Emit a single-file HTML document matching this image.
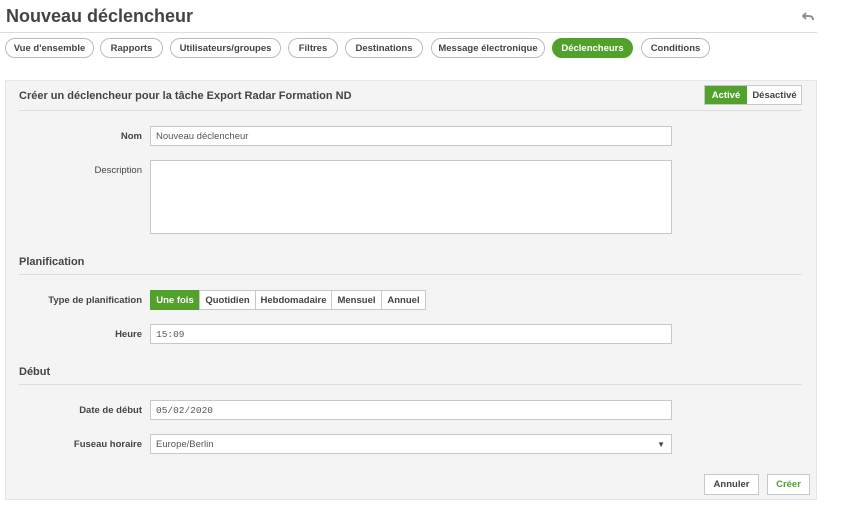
<!DOCTYPE html>
<html><head><meta charset="utf-8"><style>
*{box-sizing:border-box;margin:0;padding:0}
body{width:847px;height:517px;background:#fff;font-family:"Liberation Sans",sans-serif;color:#404040;position:relative;overflow:hidden}
.a{position:absolute}
.tab{position:absolute;top:38px;height:20px;border:1px solid #bbb;border-radius:10px;font-size:9.5px;font-weight:bold;text-align:center;line-height:20px;background:#fff;color:#444}
.lbl{position:absolute;right:705px;font-size:9.5px;font-weight:bold;color:#444;text-align:right}
.inp{position:absolute;left:150px;width:522px;height:20px;border:1px solid #c8c8c8;background:#fff;font-size:9.5px;line-height:19px;padding-left:5px;color:#555}
.h{position:absolute;left:19px;font-size:11px;font-weight:bold;color:#444}
.ln{position:absolute;left:19px;width:783px;height:1px;background:#ddd}
.seg{position:absolute;top:290px;height:20px;border:1px solid #c8c8c8;font-size:9.5px;font-weight:bold;text-align:center;line-height:19px;background:#fff;color:#444}
.btn{position:absolute;top:474px;height:21px;border:1px solid #c8c8c8;background:#fff;font-size:9.5px;font-weight:bold;text-align:center;line-height:20px}
</style></head><body>
<div class="a" style="left:6px;top:6px;font-size:18px;font-weight:bold;color:#444">Nouveau déclencheur</div>
<svg class="a" style="left:802px;top:12px" width="12" height="10" viewBox="0 0 12 10"><path d="M4 1 L1 4 L4 7 M1 4 H7 Q11 4 11 8" fill="none" stroke="#888" stroke-width="1.8"/></svg>
<div class="a" style="left:0;top:32px;width:817px;height:1px;background:#ddd"></div>
<div class="tab" style="left:5px;width:89px">Vue d'ensemble</div>
<div class="tab" style="left:100px;width:63px">Rapports</div>
<div class="tab" style="left:170px;width:111px">Utilisateurs/groupes</div>
<div class="tab" style="left:288px;width:50px">Filtres</div>
<div class="tab" style="left:345px;width:78px">Destinations</div>
<div class="tab" style="left:431px;width:114px">Message électronique</div>
<div class="tab" style="left:552px;width:81px;background:#52a12d;border-color:#52a12d;color:#fff">Déclencheurs</div>
<div class="tab" style="left:641px;width:69px">Conditions</div>
<div class="a" style="left:5px;top:80px;width:812px;height:420px;background:#f4f4f4;border:1px solid #e6e6e6"></div>
<div class="h" style="top:90px">Créer un déclencheur pour la tâche Export Radar Formation ND</div>
<div class="ln" style="top:110px"></div>
<div class="a" style="left:704px;top:85px;width:98px;height:20px;border:1px solid #c8c8c8;background:#fff;font-size:9.5px;font-weight:bold;line-height:19px">
<span class="a" style="left:0;top:0;width:42px;height:18px;background:#52a12d;color:#fff;text-align:center">Activé</span>
<span class="a" style="left:42px;top:0;width:55px;text-align:center;color:#444">Désactivé</span></div>
<div class="lbl" style="top:131px">Nom</div>
<div class="inp" style="top:126px">Nouveau déclencheur</div>
<div class="lbl" style="top:165px;font-weight:normal">Description</div>
<div class="inp" style="top:160px;height:74px"></div>
<div class="h" style="top:256px">Planification</div>
<div class="ln" style="top:274px"></div>
<div class="lbl" style="top:295px">Type de planification</div>
<div class="seg" style="left:150px;width:50px;background:#52a12d;border-color:#52a12d;color:#fff">Une fois</div>
<div class="seg" style="left:199px;width:57px">Quotidien</div>
<div class="seg" style="left:255px;width:77px">Hebdomadaire</div>
<div class="seg" style="left:331px;width:51px">Mensuel</div>
<div class="seg" style="left:381px;width:45px">Annuel</div>
<div class="lbl" style="top:329px">Heure</div>
<div class="inp" style="top:324px;font-family:'Liberation Mono',monospace">15:09</div>
<div class="h" style="top:366px">Début</div>
<div class="ln" style="top:384px"></div>
<div class="lbl" style="top:405px">Date de début</div>
<div class="inp" style="top:400px;font-family:'Liberation Mono',monospace">05/02/2020</div>
<div class="lbl" style="top:439px">Fuseau horaire</div>
<div class="inp" style="top:434px">Europe/Berlin<span class="a" style="right:6px;top:0;font-size:8px;color:#444">▼</span></div>
<div class="btn" style="left:704px;width:55px;color:#444">Annuler</div>
<div class="btn" style="left:767px;width:43px;color:#52a12d">Créer</div>
</body></html>
